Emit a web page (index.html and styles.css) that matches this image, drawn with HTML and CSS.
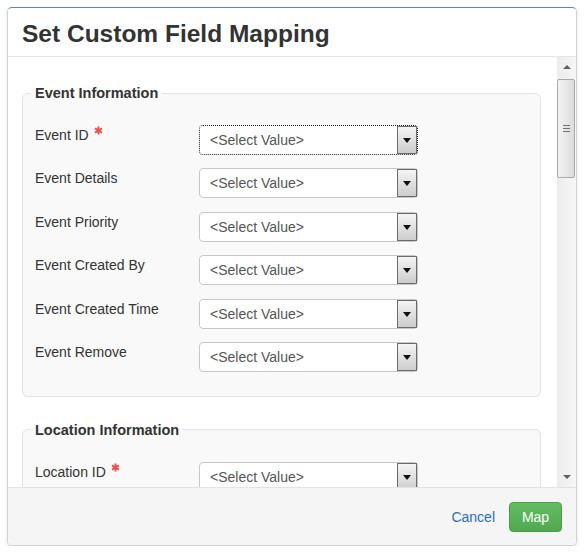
FILE: index.html
```html
<!DOCTYPE html>
<html lang="en">
<head>
  <meta charset="UTF-8">
  <meta name="viewport" content="width=device-width, initial-scale=1.0">
  <title>Set Custom Field Mapping</title>
  <link rel="stylesheet" href="styles.css">
</head>
<body>
  <div class="modal">
    <div class="modal-header">
      <h2>Set Custom Field Mapping</h2>
    </div>

    <div class="modal-body">
      <div class="scroll-content">
        <fieldset>
          <legend>Event Information</legend>
          <div class="field-row">
            <label>Event ID <svg class="req" width="9" height="9" viewBox="0 0 10 10"><path d="M5 0.5v9M1.1 2.75l7.8 4.5M1.1 7.25l7.8-4.5" /></svg></label>
            <div class="select focused"><span>&lt;Select Value&gt;</span><span class="arrow"></span></div>
          </div>
          <div class="field-row">
            <label>Event Details</label>
            <div class="select"><span>&lt;Select Value&gt;</span><span class="arrow"></span></div>
          </div>
          <div class="field-row">
            <label>Event Priority</label>
            <div class="select"><span>&lt;Select Value&gt;</span><span class="arrow"></span></div>
          </div>
          <div class="field-row">
            <label>Event Created By</label>
            <div class="select"><span>&lt;Select Value&gt;</span><span class="arrow"></span></div>
          </div>
          <div class="field-row">
            <label>Event Created Time</label>
            <div class="select"><span>&lt;Select Value&gt;</span><span class="arrow"></span></div>
          </div>
          <div class="field-row">
            <label>Event Remove</label>
            <div class="select"><span>&lt;Select Value&gt;</span><span class="arrow"></span></div>
          </div>
        </fieldset>

        <fieldset>
          <legend>Location Information</legend>
          <div class="field-row">
            <label>Location ID <svg class="req" width="9" height="9" viewBox="0 0 10 10"><path d="M5 0.5v9M1.1 2.75l7.8 4.5M1.1 7.25l7.8-4.5" /></svg></label>
            <div class="select"><span>&lt;Select Value&gt;</span><span class="arrow"></span></div>
          </div>
        </fieldset>
      </div>

      <!-- fake scrollbar, the page itself doesn't scroll -->
      <div class="scrollbar">
        <div class="sb-btn"><span class="tri-up"></span></div>
        <div class="sb-thumb"><span></span><span></span><span></span></div>
        <div class="sb-track"></div>
        <div class="sb-btn"><span class="tri-down"></span></div>
      </div>
    </div>

    <div class="modal-footer">
      <a href="#" class="cancel">Cancel</a>
      <button type="button" class="btn-map">Map</button>
    </div>
  </div>
</body>
</html>
```

FILE: styles.css
```css
body {
  margin: 0;
  padding: 7px 0 0 7px;
  background-color: #fff;
  font-family: "Liberation Sans", Arial, sans-serif;
  font-size: 14px;
  color: #333;
}

.modal {
  width: 568px;
  height: 537px;
  display: flex;
  flex-direction: column;
  background: #fff;
  border: 1px solid #cfd3d5;
  border-top-color: #6f8793;
  border-radius: 5px;
  box-shadow: 0 1px 4px rgba(0, 0, 0, 0.12);
  overflow: hidden;
}

.modal-header {
  height: 36px;
  padding: 12px 14px 0;
  border-bottom: 1px solid #e5e5e5;
}

.modal-header h2 {
  margin: 0;
  font-size: 24.5px;
  line-height: 27px;
  font-weight: bold;
  color: #333;
}

.modal-body {
  height: 430px;
  display: flex;
}

.scroll-content {
  width: 519px;
  padding: 26px 16px 0 14px;
  overflow: hidden;
}

fieldset {
  margin: 0 0 23px;
  padding: 22px 12px 24px;
  background: #f9f9f9;
  border: 1px solid #e3e3e3;
  border-radius: 6px;
}

legend {
  margin-left: -4px;
  padding: 0 4px;
  font-size: 14.5px;
  line-height: 20px;
  font-weight: bold;
  color: #333;
}

.field-row {
  display: flex;
  align-items: flex-start;
  height: 30px;
  margin-bottom: 13.4px;
}

.field-row:last-child {
  margin-bottom: 0;
}

.field-row label {
  width: 164px;
  line-height: 20px;
  color: #333;
}

.req {
  vertical-align: 5px;
  margin-left: 1px;
}

.req path {
  stroke: #e8534a;
  stroke-width: 2.2;
  fill: none;
}

.select {
  width: 217px;
  height: 28px;
  display: flex;
  align-items: center;
  justify-content: space-between;
  background: #fff;
  border: 1px solid #c8c8c8;
  border-radius: 4px;
  color: #555;
}

.select.focused {
  border: 1px dotted #222;
}

.select span:first-child {
  padding-left: 10px;
}

.arrow {
  width: 18px;
  height: 26px;
  position: relative;
  border: 1px solid #6b6b6b;
  background: linear-gradient(#f4f4f4, #cdcdcd);
}

.arrow::after {
  content: "";
  position: absolute;
  left: 5px;
  top: 11px;
  border-left: 4px solid transparent;
  border-right: 4px solid transparent;
  border-top: 5px solid #111;
}

.scrollbar {
  width: 19px;
  display: flex;
  flex-direction: column;
  background: linear-gradient(to right, #ececec, #f6f6f6);
}

.sb-btn {
  height: 20px;
  display: flex;
  align-items: center;
  justify-content: center;
}

.tri-up,
.tri-down {
  width: 0;
  height: 0;
  border-left: 4px solid transparent;
  border-right: 4px solid transparent;
}

.tri-up {
  border-bottom: 4px solid #606060;
}

.tri-down {
  border-top: 4px solid #606060;
}

.sb-thumb {
  height: 97px;
  margin: 2px 1px 0 0;
  display: flex;
  flex-direction: column;
  align-items: center;
  justify-content: center;
  gap: 2px;
  background: linear-gradient(to right, #f3f3f3, #dcdcdc);
  border: 1px solid #a9a9a9;
  border-radius: 2px;
}

.sb-thumb span {
  width: 7px;
  height: 1px;
  background: #707070;
}

.sb-track {
  flex: 1;
}

.modal-footer {
  height: 30px;
  padding: 14px 14px 13px;
  display: flex;
  align-items: center;
  justify-content: flex-end;
  gap: 14px;
  background: #f5f5f5;
  border-top: 1px solid #e3e3e3;
}

.cancel {
  color: #2a6fb8;
  text-decoration: none;
}

.btn-map {
  width: 53px;
  height: 30px;
  padding: 0;
  font-family: "Liberation Sans", Arial, sans-serif;
  font-size: 14px;
  color: #fff;
  background: linear-gradient(#62bd62, #51a851);
  border: 1px solid #4a9e4a;
  border-radius: 4px;
  cursor: pointer;
}
```
